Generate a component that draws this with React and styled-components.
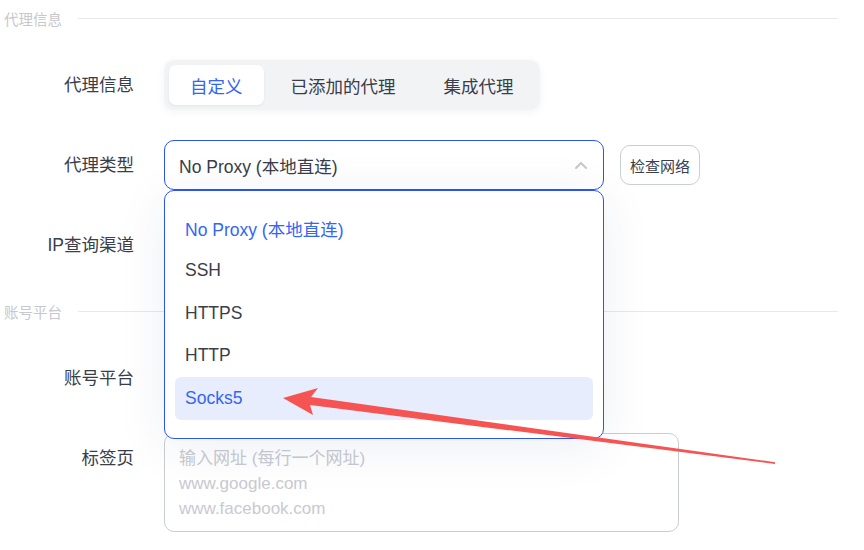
import React from "react";
import styled, { createGlobalStyle } from "styled-components";

const GlobalStyle = createGlobalStyle`
  html, body {
    margin: 0;
    padding: 0;
    background: #ffffff;
  }
  body {
    font-family: "Liberation Sans", "Noto Sans CJK SC", sans-serif;
    color: #3a3d4a;
  }
`;

const Page = styled.div`
  position: relative;
  width: 864px;
  height: 550px;
  overflow: hidden;
  padding: 8px 26px 0 4px;
  box-sizing: border-box;
`;

const SectionHeader = styled.div`
  display: flex;
  align-items: center;
  gap: 16px;
  height: 20px;
  margin-top: ${(p) => p.$top || 0}px;
  font-size: 14.5px;
  color: #c6c8ce;

  &::after {
    content: "";
    flex: 1;
    height: 1px;
    background: #e8e9ed;
  }
`;

const Row = styled.div`
  display: grid;
  grid-template-columns: 130px auto;
  column-gap: 30px;
  align-items: ${(p) => (p.$top ? "start" : "center")};
  margin-top: ${(p) => p.$gap}px;
`;

const Label = styled.div`
  text-align: right;
  font-size: 17.5px;
  line-height: 25px;
  color: #3a3d4a;
  padding-top: ${(p) => (p.$top ? 13 : 0)}px;
`;

const Segmented = styled.div`
  display: flex;
  gap: 6px;
  width: fit-content;
  height: 50px;
  padding: 5px;
  box-sizing: border-box;
  background: #f2f3f5;
  border-radius: 10px;
  box-shadow: 0 2px 8px rgba(20, 30, 60, 0.05);
`;

const Tab = styled.div`
  display: flex;
  align-items: center;
  justify-content: center;
  padding: 0 21px;
  border-radius: 7px;
  font-size: 17.5px;
  color: ${(p) => (p.$active ? "#3366f5" : "#3a3d4a")};
  background: ${(p) => (p.$active ? "#ffffff" : "transparent")};
  box-shadow: ${(p) => (p.$active ? "0 1px 3px rgba(0,0,0,0.06)" : "none")};
`;

const Controls = styled.div`
  display: flex;
  align-items: center;
  gap: 16px;
`;

const SelectWrap = styled.div`
  position: relative;
  width: 440px;
`;

const SelectBox = styled.div`
  display: flex;
  align-items: center;
  justify-content: space-between;
  height: 50px;
  padding: 0 15px 0 14px;
  box-sizing: border-box;
  border: 1px solid ${(p) => (p.$open ? "#2b55f0" : "#c9cdd4")};
  border-radius: 10px;
  background: #fff;
  font-size: 17.5px;
  color: #3a3d4a;
`;

const Dropdown = styled.ul`
  position: absolute;
  left: 0;
  right: 0;
  top: 100%;
  z-index: 5;
  margin: 0;
  padding: 16px 10px 18px;
  list-style: none;
  background: #fff;
  border: 1px solid #2b55f0;
  border-radius: 10px;
  box-shadow: 0 8px 50px rgba(30, 50, 120, 0.08);
`;

const Option = styled.li`
  display: flex;
  align-items: center;
  height: 42.5px;
  padding: 0 10px;
  border-radius: 6px;
  font-size: 17.5px;
  color: ${(p) => (p.$blue ? "#3366f5" : "#3a3d4a")};
  background: ${(p) => (p.$hover ? "#e8edfd" : "transparent")};
`;

const CheckButton = styled.button`
  height: 40px;
  padding: 0 9px;
  border: 1px solid #c9cdd4;
  border-radius: 10px;
  background: #fff;
  font-family: inherit;
  font-size: 15px;
  color: #3a3d4a;
`;

const TextArea = styled.div`
  width: 515px;
  height: 99px;
  padding: 12px 14px;
  box-sizing: border-box;
  border: 1px solid #c9cdd4;
  border-radius: 10px;
  font-size: 17px;
  line-height: 25px;
  color: #c8cad0;
`;

const Overlay = styled.svg`
  position: absolute;
  left: 0;
  top: 0;
  z-index: 10;
  pointer-events: none;
`;

const Chevron = () => (
  <svg width="14" height="10" viewBox="0 0 14 10">
    <path d="M2 8 L7 3 L12 8" fill="none" stroke="#c4c7ce" strokeWidth="2" strokeLinecap="round" strokeLinejoin="round" />
  </svg>
);

const options = ["No Proxy (本地直连)", "SSH", "HTTPS", "HTTP", "Socks5"];

export default function App() {
  return (
    <>
      <GlobalStyle />
      <Page>
        <SectionHeader>代理信息</SectionHeader>

        <Row $gap={32}>
          <Label>代理信息</Label>
          <Segmented>
            <Tab $active>自定义</Tab>
            <Tab>已添加的代理</Tab>
            <Tab>集成代理</Tab>
          </Segmented>
        </Row>

        <Row $gap={30}>
          <Label>代理类型</Label>
          <Controls>
            <SelectWrap>
              <SelectBox $open>
                No Proxy (本地直连)
                <Chevron />
              </SelectBox>
              <Dropdown>
                {options.map((o, i) => (
                  <Option key={o} $blue={i === 0 || i === 4} $hover={i === 4}>
                    {o}
                  </Option>
                ))}
              </Dropdown>
            </SelectWrap>
            <CheckButton>检查网络</CheckButton>
          </Controls>
        </Row>

        <Row $gap={30}>
          <Label>IP查询渠道</Label>
          <SelectWrap>
            <SelectBox />
          </SelectWrap>
        </Row>

        <SectionHeader $top={31}>账号平台</SectionHeader>

        <Row $gap={32}>
          <Label>账号平台</Label>
          <SelectWrap>
            <SelectBox />
          </SelectWrap>
        </Row>

        <Row $gap={30} $top>
          <Label $top>标签页</Label>
          <TextArea>
            输入网址 (每行一个网址)
            <br />
            www.google.com
            <br />
            www.facebook.com
          </TextArea>
        </Row>

        <Overlay width="864" height="550" viewBox="0 0 864 550">
          <polygon
            points="283,398 318,388 311,397 775,462.2 775,464 310,405 313,415"
            fill="#f65353"
          />
        </Overlay>
      </Page>
    </>
  );
}
